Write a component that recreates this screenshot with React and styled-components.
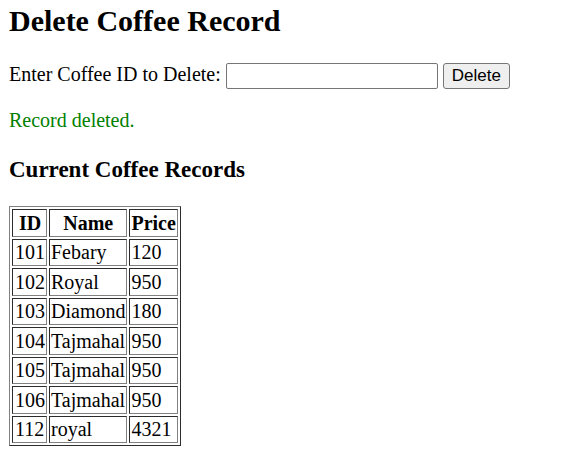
import React from "react";
import styled, { createGlobalStyle } from "styled-components";

const GlobalStyle = createGlobalStyle`
  body {
    margin: 0;
    background: #fff;
    color: #000;
    font-family: "Liberation Serif", "Times New Roman", serif;
    font-size: 20px;
    line-height: 24px;
  }
`;

const Page = styled.main`
  padding: 4px 9px 24px;
`;

const Title = styled.h2`
  margin: 0 0 24px;
  font-size: 30px;
  line-height: 34px;
`;

const DeleteForm = styled.form`
  display: flex;
  flex-wrap: wrap;
  align-items: baseline;
  gap: 5px;
`;

const IdInput = styled.input`
  box-sizing: border-box;
  width: 212px;
  height: 26px;
  padding: 1px 2px;
  border: 1px solid #767676;
  border-radius: 2px;
  font: 17px "Liberation Sans", Arial, sans-serif;
`;

const DeleteButton = styled.button`
  box-sizing: border-box;
  height: 26px;
  padding: 1px 8px;
  border: 1px solid #767676;
  border-radius: 3px;
  background: #efefef;
  color: #000;
  font: 17px "Liberation Sans", Arial, sans-serif;
`;

const Message = styled.p`
  margin: 19px 0 25px;
  color: green;
`;

const Subtitle = styled.h3`
  margin: 0 0 23px;
  font-size: 23px;
  line-height: 26px;
`;

const Table = styled.table`
  border: 1px solid;
  border-color: #808080 #2c2c2c #2c2c2c #808080;
  border-spacing: 2px;
  border-collapse: separate;
`;

const Row = styled.tr`
  line-height: 24px;

  tbody &:nth-child(odd) {
    line-height: 23px;
  }
`;

const Cell = styled.td`
  padding: 1px;
  border: 1px solid;
  border-color: #2c2c2c #808080 #808080 #2c2c2c;

  &:first-child {
    padding-left: 2px;
  }
`;

const HeadCell = styled(Cell).attrs({ as: "th", scope: "col" })`
  font-weight: bold;
`;

const records = [
  [101, "Febary", 120],
  [102, "Royal", 950],
  [103, "Diamond", 180],
  [104, "Tajmahal", 950],
  [105, "Tajmahal", 950],
  [106, "Tajmahal", 950],
  [112, "royal", 4321],
];

export default function App() {
  return (
    <Page>
      <GlobalStyle />
      <Title>Delete Coffee Record</Title>
      <DeleteForm onSubmit={(e) => e.preventDefault()}>
        <label htmlFor="coffee-id">Enter Coffee ID to Delete:</label>
        <IdInput id="coffee-id" type="text" />
        <DeleteButton type="submit">Delete</DeleteButton>
      </DeleteForm>
      <Message role="status">Record deleted.</Message>
      <Subtitle>Current Coffee Records</Subtitle>
      <Table>
        <thead>
          <Row>
            <HeadCell>ID</HeadCell>
            <HeadCell>Name</HeadCell>
            <HeadCell>Price</HeadCell>
          </Row>
        </thead>
        <tbody>
          {records.map(([id, name, price]) => (
            <Row key={id}>
              <Cell>{id}</Cell>
              <Cell>{name}</Cell>
              <Cell>{price}</Cell>
            </Row>
          ))}
        </tbody>
      </Table>
    </Page>
  );
}
